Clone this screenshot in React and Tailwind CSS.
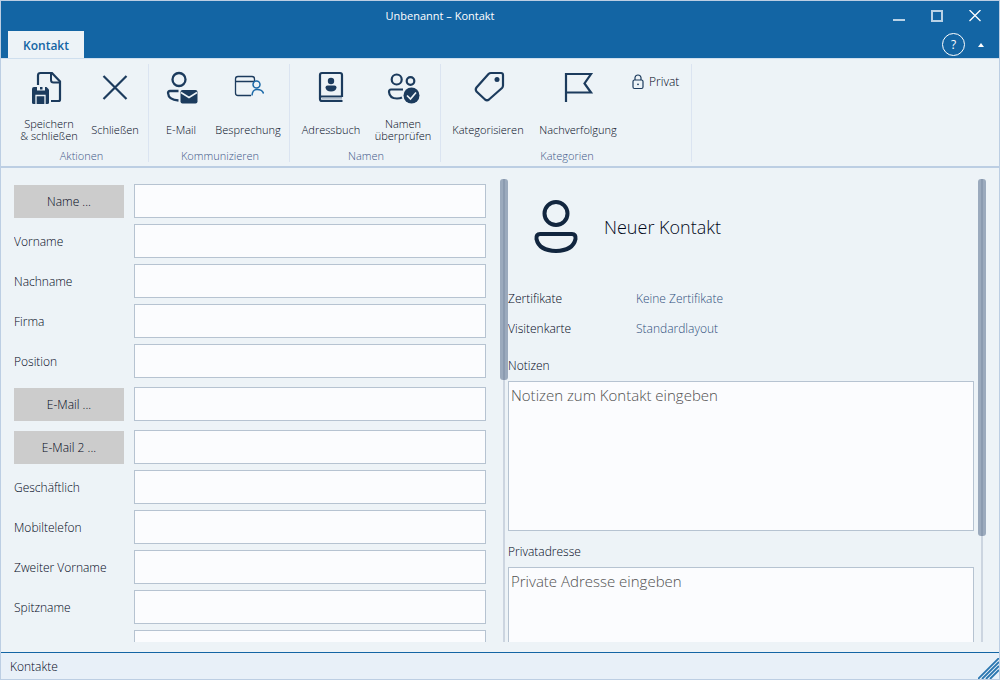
import React, { useState } from "react";

const INK = "#1c3b5d";

function SaveIcon() {
  return (
    <svg width="34" height="34" viewBox="-1 0 34 34" fill="none">
      <path d="M5 14V4.500Q5 2 7.500 2H19L27 10.500V28.500Q27 30 25.500 30H18" stroke={INK} strokeWidth="2.200" />
      <path d="M18 2.500V9Q18 11.500 20.500 11.500H27" stroke={INK} strokeWidth="2" />
      <path d="M1 16H13.500L16 18.500V31.500Q16 33 14.500 33H.5Q-1 33 -1 31.500V18Q-1 16 1 16Z" fill={INK} />
      <path d="M4 16H12V19.500H4Z" fill="#edf3f7" />
      <path d="M7 16H9.500V18.500H7Z" fill={INK} />
      <path d="M3 33V24.500H12V33" stroke="#edf3f7" strokeWidth="1.300" />
    </svg>
  );
}

function CloseIcon() {
  return (
    <svg width="32" height="34" viewBox="0 1 32 34" fill="none">
      <path d="M4.500 6L27.500 29M27.500 6L4.500 29" stroke={INK} strokeWidth="2.200" />
    </svg>
  );
}

function MailIcon() {
  return (
    <svg width="34" height="34" viewBox="-2 0 34 34" fill="none">
      <circle cx="13" cy="8.500" r="6.500" stroke={INK} strokeWidth="2.300" />
      <path d="M12.500 20H4Q2 20 2 22Q2.500 29 12.500 29.500" stroke={INK} strokeWidth="2.300" />
      <rect x="14.500" y="19" width="17" height="13.500" rx="2" fill={INK} />
      <path d="M15 21.500L23 26.500L31 21.500" stroke="#edf3f7" strokeWidth="1.500" />
    </svg>
  );
}

function MeetingIcon() {
  return (
    <svg width="32" height="34" viewBox="0 1 32 34" fill="none">
      <path d="M19 25.500H6Q3.500 25.500 3.500 23V9Q3.500 6.500 6 6.500H20Q22.500 6.500 22.500 9V11M3.500 11.500H22.500" stroke={INK} strokeWidth="1.300" />
      <circle cx="24.500" cy="14.500" r="3.500" stroke="#1b69a8" strokeWidth="1.500" />
      <path d="M20 25.500Q20.500 19.500 25 19.500Q30.500 19.500 31.500 23.500" stroke="#1b69a8" strokeWidth="1.500" />
    </svg>
  );
}

function BookIcon() {
  return (
    <svg width="32" height="34" viewBox="0 0 32 34" fill="none">
      <path d="M27 26V4Q27 2 25 2H7Q5 2 5 4V28Q5 30 7 30H27.500M5.500 25.500H27" stroke={INK} strokeWidth="2.200" />
      <path d="M7 27.700H27" stroke="#b5c2d0" strokeWidth="2" />
      <circle cx="16" cy="10" r="3.200" fill={INK} />
      <path d="M12.500 14.500H19.500Q21.500 14.500 21.500 16.500Q21 20.500 16 20.500Q11 20.500 10.500 16.500Q10.500 14.500 12.500 14.500Z" fill={INK} />
    </svg>
  );
}

function CheckNamesIcon() {
  return (
    <svg width="34" height="34" viewBox="-1 0 34 34" fill="none">
      <circle cx="9.700" cy="8.500" r="5" stroke={INK} strokeWidth="2.200" />
      <circle cx="23.500" cy="10" r="3.800" stroke={INK} strokeWidth="2.200" />
      <path d="M16 18.500H4Q2 18.500 2 21Q2.500 27.500 10 27.500Q13 27.500 15 26.500" stroke={INK} strokeWidth="2.200" />
      <circle cx="24.500" cy="24.500" r="8" fill={INK} />
      <path d="M20 24.500L23.500 28L29 21.500" stroke="#edf3f7" strokeWidth="1.700" />
    </svg>
  );
}

function TagIcon() {
  return (
    <svg width="34" height="34" viewBox="-2 0 34 34" fill="none">
      <path d="M18 2H28Q30 2 30 4V14.500Q30 16 29 17L16 28.500Q14 30 12 28.500L3.500 20.500Q2 18.500 3.500 16.500L15.500 3Q16.500 2 18 2Z" stroke={INK} strokeWidth="2.200" />
      <circle cx="24" cy="8.500" r="2.500" fill={INK} />
    </svg>
  );
}

function FlagIcon() {
  return (
    <svg width="32" height="34" viewBox="0 0 32 34" fill="none">
      <path d="M4 31V3H29L22.500 12.500L29 21.500H4" stroke={INK} strokeWidth="2.200" />
    </svg>
  );
}

function LockIcon() {
  return (
    <svg width="12" height="16" viewBox="0 0 12 16" fill="none">
      <rect x="1" y="6" width="10" height="8.500" rx="1.500" stroke={INK} strokeWidth="1.200" />
      <path d="M3 6V3.500Q3.500 1 6 1Q8.500 1 9 3.500V6" stroke={INK} strokeWidth="1.200" />
      <circle cx="6" cy="10.300" r="0.900" fill={INK} />
    </svg>
  );
}

function PersonIcon() {
  return (
    <svg width="46" height="56" viewBox="0 0 46 56" fill="none" stroke="#12263f" strokeWidth="4">
      <circle cx="23" cy="14.500" r="11.500" />
      <path d="M7 35H39Q43 35 42.500 40Q40 51.500 23 52Q6 51.500 3.500 40Q3 35 7 35Z" />
    </svg>
  );
}

const groups = [
  {
    name: "Aktionen",
    className: "w-[136px]",
    items: [
      { label: "Speichern\n& schließen", icon: SaveIcon, className: "ml-[3px] w-[66px]" },
      { label: "Schließen", icon: CloseIcon, className: "w-[66px]" },
    ],
  },
  {
    name: "Kommunizieren",
    className: "w-[141px]",
    items: [
      { label: "E-Mail", icon: MailIcon, className: "w-16" },
      { label: "Besprechung", icon: MeetingIcon, className: "w-[70px]" },
    ],
  },
  {
    name: "Namen",
    className: "w-[151px]",
    items: [
      { label: "Adressbuch", icon: BookIcon, className: "w-[82px]" },
      { label: "Namen\nüberprüfen", icon: CheckNamesIcon, className: "w-[62px]" },
    ],
  },
  {
    name: "Kategorien",
    className: "w-[251px]",
    items: [
      { label: "Kategorisieren", icon: TagIcon, className: "w-[94px]" },
      { label: "Nachverfolgung", icon: FlagIcon, className: "w-[86px]" },
    ],
    toggle: "Privat",
  },
];

const fields = [
  { id: "name", label: "Name ...", button: true },
  { id: "vorname", label: "Vorname" },
  { id: "nachname", label: "Nachname" },
  { id: "firma", label: "Firma" },
  { id: "position", label: "Position" },
  { id: "email", label: "E-Mail ...", button: true },
  { id: "email2", label: "E-Mail 2 ...", button: true },
  { id: "geschaeftlich", label: "Geschäftlich" },
  { id: "mobil", label: "Mobiltelefon" },
  { id: "zweiter", label: "Zweiter Vorname" },
  { id: "spitzname", label: "Spitzname" },
  { id: "weitere", label: "" },
];

function TitleBar() {
  return (
    <header className="h-[57px] shrink-0 bg-[#1365a4] text-white">
      <div className="grid h-[30px] grid-cols-[1fr_auto_1fr] items-center">
        <h1 className="col-start-2 pr-[120px] text-[11px] font-normal">Unbenannt – Kontakt</h1>
        <div className="flex justify-end pr-[5px]">
          <button aria-label="Minimieren" className="flex h-7 w-[38px] items-center justify-center">
            <svg width="12" height="12" viewBox="0 0 12 12">
              <path d="M0 10H12" stroke="#b9d2e6" strokeWidth="2" />
            </svg>
          </button>
          <button aria-label="Maximieren" className="flex h-7 w-[38px] items-center justify-center">
            <svg width="12" height="12" viewBox="0 0 12 12" fill="none">
              <rect x="1" y="1" width="10" height="10" stroke="#b9d2e6" strokeWidth="2" />
            </svg>
          </button>
          <button aria-label="Fenster schließen" className="flex h-7 w-[38px] items-center justify-center">
            <svg width="12" height="12" viewBox="0 0 12 12">
              <path d="M.5 0L11.500 11M11.500 0L.5 11" stroke="white" strokeWidth="1.300" />
            </svg>
          </button>
        </div>
      </div>
      <div className="flex h-[27px] items-center justify-between pr-[14px] pl-[7px]">
        <button className="h-full w-[76px] bg-[#edf3f7] pt-[2px] font-semibold text-[#1365a4]">
          Kontakt
        </button>
        <div className="flex items-center gap-3">
          <button aria-label="Hilfe" className="flex size-[23px] items-center justify-center rounded-full border border-white font-normal">
            ?
          </button>
          <button aria-label="Menüband einklappen" className="flex h-4 items-center">
            <svg width="8" height="4" viewBox="0 0 8 4">
              <path d="M1 4L4 0L7 4Z" fill="white" />
            </svg>
          </button>
        </div>
      </div>
    </header>
  );
}

function Ribbon() {
  return (
    <nav className="flex h-[110px] shrink-0 border-t border-b-2 border-t-[#cfdfee] border-b-[#bccee3] bg-[#edf3f7] pt-[5px] pb-1 pl-3">
      {groups.map((group) => (
        <section key={group.name} className={`flex flex-col border-r border-[#dbe4f1] ${group.className}`}>
          <div className="flex flex-1 items-start">
            {group.items.map((item) => (
              <button key={item.label} className={`flex flex-col items-center gap-[13px] pt-[7px] text-[11px] ${item.className}`}>
                <item.icon />
                <span className="flex h-6 items-center text-center leading-3 whitespace-pre">
                  {item.label}
                </span>
              </button>
            ))}
            {group.toggle && (
              <button className="flex items-center gap-[5px] pt-[10px] pl-[11px] leading-4">
                <LockIcon />
                {group.toggle}
              </button>
            )}
          </div>
          <h2 className="pl-[2px] text-center text-[11px] leading-3 text-[#3d5788]">{group.name}</h2>
        </section>
      ))}
    </nav>
  );
}

function ScrollBar({ size }) {
  return (
    <div className="grid w-2 shrink-0 grid-cols-1 grid-rows-1 justify-items-center">
      <div className="col-start-1 row-start-1 w-[2px] bg-[#ccd5e0]" />
      <div
        className="col-start-1 row-start-1 flex w-2 justify-center rounded-[3px] bg-[#9baabd]"
        style={{ height: `${size}%` }}
      >
        <div className="w-[2px] bg-[#8b9bb0]" />
      </div>
    </div>
  );
}

function ContactForm() {
  const [values, setValues] = useState({});

  const handleChange = (e) => {
    setValues((prev) => ({ ...prev, [e.target.id]: e.target.value }));
  };

  return (
    <form className="flex min-w-0 flex-1 flex-col gap-[6px] overflow-hidden pt-[2px] pr-[14px]">
      {fields.map((field) => (
        <div
          key={field.id}
          className={`flex shrink-0 items-end gap-[10px] ${field.button ? "h-[37px]" : "h-[34px]"}`}
        >
          {field.button ? (
            <button type="button" className="h-[33px] w-[110px] shrink-0 bg-[#cccccc]">
              {field.label}
            </button>
          ) : (
            <label htmlFor={field.id} className="w-[110px] shrink-0 self-center pt-[2px]">
              {field.label}
            </label>
          )}
          <input
            id={field.id}
            type="text"
            aria-label={field.label || "Weitere Angabe"}
            value={values[field.id] || ""}
            onChange={handleChange}
            className="h-[34px] min-w-0 flex-1 border border-[#b6c3d1] bg-[#fbfcfe] px-2"
          />
        </div>
      ))}
    </form>
  );
}

function ContactDetails() {
  return (
    <div className="flex min-w-0 flex-1 flex-col overflow-hidden pr-1">
      <div className="flex shrink-0 items-center gap-[25px] pt-5 pl-[25px]">
        <PersonIcon />
        <h2 className="text-lg">Neuer Kontakt</h2>
      </div>
      <dl className="mt-[29px] grid shrink-0 grid-cols-[128px_1fr] leading-[30px]">
        <dt>Zertifikate</dt>
        <dd>
          <a href="#zertifikate" className="text-[#2f4f7c]">Keine Zertifikate</a>
        </dd>
        <dt>Visitenkarte</dt>
        <dd>
          <a href="#visitenkarte" className="text-[#2f4f7c]">Standardlayout</a>
        </dd>
      </dl>
      <label htmlFor="notizen" className="mt-[14px] mb-[7px] leading-4">Notizen</label>
      <textarea
        id="notizen"
        placeholder="Notizen zum Kontakt eingeben"
        className="h-[150px] w-full shrink-0 resize-none border border-[#b6c3d1] bg-[#fbfcfe] px-[2px] py-[2px] text-[15px] leading-[22px] placeholder:text-[#505050]"
      />
      <label htmlFor="privatadresse" className="mt-[13px] mb-[7px] leading-4">Privatadresse</label>
      <textarea
        id="privatadresse"
        placeholder="Private Adresse eingeben"
        className="h-[150px] w-full shrink-0 resize-none border border-[#b6c3d1] bg-[#fbfcfe] px-[2px] py-[2px] text-[15px] leading-[22px] placeholder:text-[#505050]"
      />
    </div>
  );
}

function StatusBar() {
  return (
    <footer className="flex h-[27px] shrink-0 items-center justify-between border-t border-[#1365a4] bg-[#e8f0f8] pl-[9px]">
      <span className="pt-[2px]">Kontakte</span>
      <svg width="21" height="21" viewBox="0 0 21 21" className="self-end" stroke="#2a76b0" strokeWidth="1.800">
        <path d="M0 21L21 0M4 21L21 4M8 21L21 8M12 21L21 12" />
      </svg>
    </footer>
  );
}

function App() {
  return (
    <div className="flex h-screen flex-col border border-[#bccee3] bg-[#edf3f7] font-['Open_Sans','Noto_Sans',sans-serif] text-xs font-light text-[#000618]">
      <TitleBar />
      <Ribbon />
      <main className="grid min-h-0 flex-1 grid-cols-[494fr_478fr] grid-rows-[minmax(0,1fr)] px-[13px] pt-[11px] pb-[10px]">
        <div className="flex min-h-0 min-w-0">
          <ContactForm />
          <ScrollBar size={43.4} />
        </div>
        <div className="flex min-h-0 min-w-0">
          <ContactDetails />
          <ScrollBar size={77.1} />
        </div>
      </main>
      <StatusBar />
    </div>
  );
}

export default App;
